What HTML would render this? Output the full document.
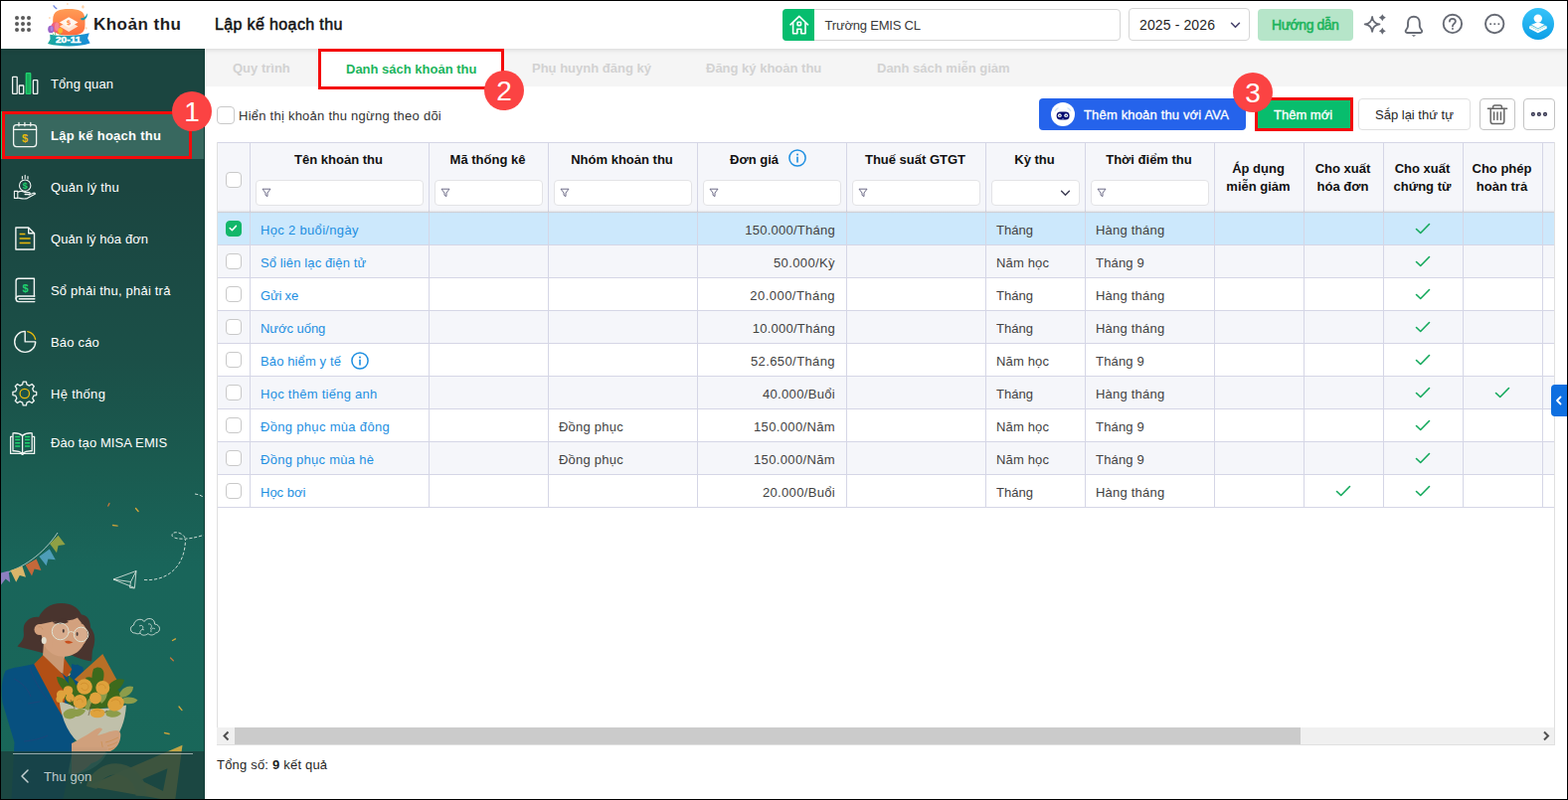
<!DOCTYPE html>
<html lang="vi">
<head>
<meta charset="utf-8">
<title>Khoản thu - Lập kế hoạch thu</title>
<style>
*{box-sizing:border-box;margin:0;padding:0}
html,body{width:1577px;height:805px;overflow:hidden;background:#fff}
body{font-family:"Liberation Sans",sans-serif;font-size:13px;color:#212121;position:relative}
.frame{position:absolute;left:0;top:0;width:1577px;height:805px;border:1px solid #000;z-index:100;pointer-events:none}
.abs{position:absolute}
.t{position:absolute;white-space:nowrap;line-height:1}

/* ---------- header ---------- */
header{position:absolute;left:1px;top:1px;width:1575px;height:48px;background:#fff;z-index:20;box-shadow:0 1px 5px rgba(0,0,0,.13)}
.apps{position:absolute;left:14px;top:15px;width:16px;height:16px}
.apps i{position:absolute;width:4px;height:4px;border-radius:50%;background:#5a5a5a}
.logo{position:absolute;left:46px;top:1px;width:46px;height:46px}
.brand{left:93px;top:15px;font-size:17px;font-weight:700;color:#1f1f1f;letter-spacing:.48px}
.pagetitle{left:215px;top:16px;font-size:16px;font-weight:400;color:#111;-webkit-text-stroke:.5px #111;letter-spacing:.37px}
.school{position:absolute;left:786px;top:8px;width:340px;height:32px;border:1px solid #d6d6d6;border-radius:4px;background:#fff}
.school .ic{position:absolute;left:-1px;top:-1px;width:32px;height:32px;background:#06bd6e;border-radius:4px 0 0 4px}
.school .t{left:41.500px;top:9px;font-size:13px;color:#3a3a3a;letter-spacing:-.2px}
.year{position:absolute;left:1134px;top:7px;width:122px;height:33px;border:1px solid #d6d6d6;border-radius:4px;background:#fff}
.year .t{left:10px;top:9px;font-size:14px;color:#1f1f1f;letter-spacing:.12px}
.guide{position:absolute;left:1264px;top:8px;width:96px;height:32px;border-radius:4px;background:#b6e5c9}
.guide .t{left:14px;top:9px;font-size:14px;font-weight:400;color:#1cb45c;-webkit-text-stroke:.55px #1cb45c;letter-spacing:-.45px}
.hicon{position:absolute}
.avatar{position:absolute;left:1530px;top:7px;width:32px;height:32px;border-radius:50%;background:linear-gradient(#36c3f9,#0d9fe6)}

/* ---------- sidebar ---------- */
aside{position:absolute;left:1px;top:49px;width:205px;height:755px;overflow:hidden;border-right:1px solid #0f3a34;
 background:linear-gradient(180deg,#1b4540 0,#1b4540 140px,#1b4a44 215px,#1b5048 315px,#1a5b50 420px,#19655a 520px,#196759 755px)}
.mi{position:absolute;left:0;width:204px;height:48px}
.mi .t{left:50px;top:18px;font-size:13px;color:#fff}
.mi svg{position:absolute;left:0;top:0;width:48px;height:48px}
.mi.active{background:#38685f}
.mi.active .t{font-weight:700}
.mi.active:before{content:"";position:absolute;left:0;top:0;width:2px;height:48px;background:#1fc46c}
.collapse{position:absolute;left:0;top:707px;width:205px;height:48px;background:rgba(27,64,60,.8)}
.collapse .ln{position:absolute;left:12px;top:2px;width:181px;height:1px;background:rgba(255,255,255,.55)}
.collapse .t{left:43px;top:19px;letter-spacing:.1px;font-size:13px;color:rgba(255,255,255,.72)}

/* ---------- main ---------- */
main{position:absolute;left:207px;top:49px;width:1369px;height:755px;background:#fff}
.tabs{position:absolute;left:0;top:0;width:1369px;height:38px;background:#f5f5f5}
.tabs .t{top:13px;font-size:13px;font-weight:700;color:#d2d2d2}
.tabs .on{position:absolute;left:116px;top:3px;width:181px;height:35px;background:#fff}
.tabs .on .t{left:25px;top:11px;color:#1cb45c}

.redbox{position:absolute;border:3px solid #f40b0b;z-index:30}
.badge{position:absolute;width:40px;height:40px;border-radius:50%;background:#fb4343;color:#fff;z-index:31;text-align:center;font-size:28px;line-height:42px}

.cb{position:absolute;width:18px;height:18px;border:1px solid #c9c9c9;border-radius:4px;background:#fff}
.btn{position:absolute;top:50px;height:32px;border-radius:4px}
.btn .t{top:10px;font-size:13px}

/* ---------- toolbar ---------- */
.tb-label{left:33px;top:61px;font-size:13px;color:#333;letter-spacing:.245px}
.b-ava{left:838px;width:208px;background:#2563eb}
.b-ava .t{left:45px;color:#fff;-webkit-text-stroke:.3px #fff;letter-spacing:.16px}
.b-ava .face{position:absolute;left:12px;top:4px;width:24px;height:24px;border-radius:50%;background:#fff}
.b-add{left:1058px;width:93px;background:#08bd6d;border-radius:0}
.b-add .t{left:16px;color:#fff;-webkit-text-stroke:.3px #fff}
.b-sort{left:1159px;width:113px;background:#fff;border:1px solid #e0e0e0}
.b-sort .t{left:16px;top:9px;color:#1f1f1f}
.b-del{left:1281px;width:36px;background:#fff;border:1px solid #c4c4c4}
.b-more{left:1325px;width:32px;background:#fff;border:1px solid #c4c4c4}

/* ---------- grid ---------- */
.grid{position:absolute;left:11px;top:94px;width:1346px;height:607px;border-left:1px solid #e0e0e0;border-right:1px solid #e0e0e0;border-bottom:1px solid #e0e0e0;overflow:hidden}
table{border-collapse:collapse;table-layout:fixed;width:1413px;position:absolute;left:-1px;top:0}
td,th{border:1px solid #d5d6e6;padding:0;font-size:13px;font-weight:400;overflow:hidden;white-space:nowrap}
thead th{height:70px;background:#f5f6fa;position:relative;vertical-align:top;border-bottom:1px solid #d8d8de}
thead th .h{position:absolute;left:-2px;right:0;top:10px;text-align:center;font-weight:700;font-size:13px;color:#111;line-height:13px}
thead th .h2{top:17px;line-height:18px}
thead th .f{position:absolute;left:5px;right:5px;top:37px;height:26px;border:1px solid #e3e3e6;border-radius:4px;background:#fff}
thead th .f svg{position:absolute;left:5px;top:7px;width:10px;height:10px}
tbody td{height:33px;color:#424242;padding:3px 11px 0 10px;position:relative}
tbody tr:nth-child(even) td{background:#f5f6fa}
tbody tr.sel td{background:#cce8fc}
tbody td.n{color:#1e8fe1}
tbody td.r{text-align:right}
tbody td.c{text-align:center;padding:0}
td .cb,th .cb{width:16px;height:16px}
td .cb{left:8px;top:8px}
td .cb.on{background:#12b76a;border-color:#12b76a}
.ck{width:16px;height:12px;vertical-align:middle;position:relative;left:-1px;top:-1px}
.info{display:inline-block;vertical-align:middle}
.hsh{position:absolute;left:0;top:68px;width:100%;height:4px;background:linear-gradient(rgba(0,0,0,0),rgba(0,0,0,.05) 40%,rgba(0,0,0,.04) 60%,rgba(0,0,0,0));z-index:3;pointer-events:none}
.hscroll{position:absolute;left:11px;top:683px;width:1345px;height:17px;background:#f0f0f0}
.hscroll .th{position:absolute;left:18px;top:0;width:1072px;height:17px;background:#cbcbcb}
.total{left:11px;top:714px;font-size:13px;color:#1f1f1f;letter-spacing:.2px}
.fly{position:absolute;left:1353px;top:338px;width:16px;height:32px;background:#0e6fe0;border-radius:4px 0 0 4px}
</style>
</head>
<body>
<div class="frame"></div>

<!-- HEADER -->
<header>
  <div class="apps">
    <i style="left:0;top:0"></i><i style="left:6px;top:0"></i><i style="left:12px;top:0"></i>
    <i style="left:0;top:6px"></i><i style="left:6px;top:6px"></i><i style="left:12px;top:6px"></i>
    <i style="left:0;top:12px"></i><i style="left:6px;top:12px"></i><i style="left:12px;top:12px"></i>
  </div>
  <svg class="abs" style="left:46px;top:0" width="46" height="48" viewBox="47 1 46 48">
<defs><linearGradient id="lg1" x1="0" y1="0" x2="0" y2="1"><stop offset="0" stop-color="#ff9c55"/><stop offset="1" stop-color="#ff6c3e"/></linearGradient>
<linearGradient id="lg2" x1="0" y1="0" x2="1" y2="0"><stop offset="0" stop-color="#1aa89c"/><stop offset=".5" stop-color="#1a9fb8"/><stop offset="1" stop-color="#1a8cdc"/></linearGradient></defs>
<path d="M69.300 9c9.500 0 16.200 1.600 16.200 10.800v5.200c0 8.600-5 10.600-16.200 10.600s-16.100-2-16.100-10.600v-5.200c0-9.200 6.600-10.800 16.100-10.800z" fill="url(#lg1)"/>
<path d="M69.200 21.300l9.300 5.300-9.300 5.500-9.300-5.500z" fill="#ffe3d3"/>
<path d="M69.200 17.200l9.300 5.300-9.300 5.500-9.300-5.500z" fill="#fff7f0"/>
<text x="69.200" y="25.300" font-family="Liberation Sans, sans-serif" font-size="7" font-weight="700" fill="#ff8138" text-anchor="middle" transform="rotate(-8 69.200 22.700)">$</text>
<path d="M53 33.500l1.200 2M55.600 31.500v4M60.600 32.500l-.6 3" stroke="#7cc46a" stroke-width=".9" fill="none"/>
<ellipse cx="55.600" cy="27.400" rx="4.400" ry="5.200" fill="#f0607c"/><ellipse cx="57.200" cy="26.800" rx="2.200" ry="4.200" fill="#f58499"/>
<ellipse cx="51.200" cy="29.400" rx="3" ry="3.600" fill="#9a63c8"/><ellipse cx="52" cy="28.800" rx="1.400" ry="2.600" fill="#b183dc"/>
<ellipse cx="60.600" cy="30.800" rx="2.400" ry="2.800" fill="#fbb52b"/>
<path d="M50.200 34.800c6 1 12 1.300 19 1.100 8-.2 15-1.200 20.600-2.600l-1.700 5.200 2.500 4.900c-7 2.200-14 3-21.400 3-7.600 0-14-.6-21.200-2.400l2.500-4.400z" fill="url(#lg2)"/>
<text x="68.700" y="43.300" font-family="Liberation Sans, sans-serif" font-size="8.200" font-weight="700" fill="#fff" stroke="#fff" stroke-width=".4" text-anchor="middle" textLength="25.500" lengthAdjust="spacingAndGlyphs">20-11</text>
<path d="M54 5.800c.8 1.200 1.800 2.200 2.800 2.800" stroke="#6f86e0" stroke-width="1.300" stroke-linecap="round" fill="none"/>
<path d="M81.300 18.300c2.800.2 5.200-1.800 6.600-5 .3 4.200-2 7.200-5.400 7-1-.1-1.600-1.200-1.200-2z" fill="#1a98ac"/>
<circle cx="67.900" cy="4" r=".9" fill="#ffdcb8"/><ellipse cx="83.400" cy="6.900" rx="1.300" ry="1.700" fill="#ffd2a6"/><circle cx="49.900" cy="18" r=".9" fill="#ffd8b4"/><circle cx="86.600" cy="28.400" r="1.100" fill="#ffd8b4"/>
</svg>
  <div class="t brand">Khoản thu</div>
  <div class="t pagetitle">Lập kế hoạch thu</div>
  <div class="school"><div class="ic"><svg width="32" height="32" viewBox="-.8 0 32 32"><g fill="none" stroke="#fff" stroke-width="1.600" stroke-linejoin="round" stroke-linecap="round">
<path d="M7.200 15.800L16 7.400l8.800 8.400"/><path d="M9.800 14.200v10.600h4.200v-4.600h4v4.600h4.200V14.200"/><rect x="14.300" y="13.200" width="3.400" height="3.400" rx=".5"/></g></svg></div><div class="t">Trường EMIS CL</div></div>
  <div class="year"><div class="t">2025 - 2026</div><svg class="abs" style="left:101px;top:13px" width="11" height="7" viewBox="0 0 12 8"><path d="M1.500 1.500l4.500 4.500 4.500-4.500" fill="none" stroke="#45416a" stroke-width="1.800" stroke-linecap="round" stroke-linejoin="round"/></svg></div>
  <div class="guide"><div class="t">Hướng dẫn</div></div>
  <svg class="hicon" style="left:1365px;top:4px" width="160" height="40" viewBox="1366 5 160 40">
<path d="M1380.1 17.0Q1380.84 23.66 1387.5 24.4Q1380.84 25.14 1380.1 31.799999999999997Q1379.36 25.14 1372.6999999999998 24.4Q1379.36 23.66 1380.1 17.0z" fill="none" stroke="#666a74" stroke-width="1.800" stroke-linejoin="round"/>
<path d="M1390.3 14.2Q1391.175 16.825 1393.8 17.7Q1391.175 18.575 1390.3 21.2Q1389.425 18.575 1386.8 17.7Q1389.425 16.825 1390.3 14.2z" fill="#666a74"/><path d="M1390.3 27.8Q1391.175 30.425 1393.8 31.3Q1391.175 32.175 1390.3 34.8Q1389.425 32.175 1386.8 31.3Q1389.425 30.425 1390.3 27.8z" fill="#666a74"/>
<path d="M1421.900 16.700c-3.600 0-5.900 2.700-5.900 6.200v3.400c0 1.600-.9 2.700-2 4.100-.9 1.200-.1 2.600 1.300 2.600h13.200c1.400 0 2.200-1.400 1.300-2.600-1.100-1.400-2-2.500-2-4.100v-3.400c0-3.500-2.300-6.200-5.900-6.200z" fill="none" stroke="#666a74" stroke-width="1.900" stroke-linejoin="round"/>
<path d="M1419.700 35.200h4.400l-2.200 1.800z" fill="#666a74"/>
<circle cx="1460.900" cy="23.900" r="9.200" fill="none" stroke="#666a74" stroke-width="1.900"/>
<path d="M1457.900 21.600c0-1.700 1.300-2.800 3-2.800s3 1.100 3 2.700c0 2.200-3 2.300-3 4.900" fill="none" stroke="#666a74" stroke-width="1.800" stroke-linecap="round"/>
<rect x="1460.100" y="28.100" width="1.700" height="1.700" fill="#666a74"/>
<circle cx="1503.200" cy="24" r="9.200" fill="none" stroke="#666a74" stroke-width="1.900"/>
<rect x="1498.300" y="23.300" width="1.700" height="1.700" fill="#666a74"/><rect x="1502.400" y="23.300" width="1.700" height="1.700" fill="#666a74"/><rect x="1506.500" y="23.300" width="1.700" height="1.700" fill="#666a74"/>
</svg>
  <div class="avatar"><svg width="32" height="32" viewBox="0 -1 32 32"><circle cx="15.800" cy="9.600" r="4.200" fill="#fff"/>
<path d="M15.800 13.200l6.600 2.600-6.600 3.700-6.600-3.700z" fill="#fff"/>
<path d="M7.100 17.300l8.700 4.400 8.900-4.400v2.400l-8.900 4.600-8.700-4.600z" fill="#fff"/>
<path d="M7.100 17.300l2-.8 6.700 3.600 6.900-3.600 2 .8-8.900 4.400z" fill="#dff3e6"/></svg></div>
</header>

<!-- SIDEBAR -->
<aside>
  <svg class="abs" style="left:0;top:431px" width="205" height="324" viewBox="1 480 205 324">
<!-- rulers -->
<path d="M183.500 749.800L88 791l88 15.500zM168.500 773.300l-4.500 22.700-23-11z" fill="#c2a545" fill-rule="evenodd"/>
<path d="M92 792.500a25.500 25.500 0 0 1 50 8.500" fill="none" stroke="#b5a552" stroke-width="11" opacity=".9"/>
<path d="M52 757h56c-4 9-12 16-24 20-10 3-22 2-30-3z" fill="#9fd0b4" opacity=".55"/>
<!-- bunting -->
<path d="M1 578c22-6 42-20 57-42" fill="none" stroke="#e8efe9" stroke-width=".7"/>
<path d="M1 576.500l7.600-2 1.600 11.500-4.600-3.500-4.600 6z" fill="#8d7fc0"/>
<path d="M10.400 574l12-4.200 3.600 11-6.200-1.800-3.600 6.800z" fill="#d9b56a"/>
<path d="M25.600 568.500l11-6 4.800 11.500-6.800-1.600-2.600 7z" fill="#c4683a"/>
<path d="M39.400 560l10.400-7.600 6 10.800-7.400-.8-1.800 6.800z" fill="#4e9db8"/>
<path d="M50 547l8.600-8.200 7 9.200-7 1-1.600 7.200z" fill="#8fa045"/>
<!-- plane + dashed path -->
<g fill="none" stroke="#e8efe9" stroke-width=".8" stroke-linejoin="round"><path d="M114 583l23-8.500-1.600 17z"/><path d="M114 583l17.500 2.500 5.500-11M131.500 585.500l-1 5.800 4.900.7"/></g>
<path d="M145 583.500c22 1.500 41-12 41.500-40.500M186 541c-3-6-13-7-13-2.500 0 4 14 6 33-.5M196 497c4 .5 7 2 10 4" fill="none" stroke="#dfe9e2" stroke-width=".9" stroke-dasharray="3.200 1.800"/>
<!-- cloud --><g transform="translate(0 -3)">
<path d="M136 640c-5 .5-6.500-6.500-1.500-8 .5-6 8.500-7.500 10.500-3.500 3-5 11-3.500 10.500 2.500 6 .5 7 8 1 9-2 2.500-6 2.500-7.500.5-3 2.500-7 2-8-.5-1.500 1-3.500 1-5 0z" fill="none" stroke="#e8efe9" stroke-width=".8"/>
<path d="M140 633c3-2 5 1 3 3.500M149 631c3.500-1 4.500 3 2 5M152 639c-1-3 2-5 4-3M141 640c-.5-2.500 2-4.500 4-3" fill="none" stroke="#e8efe9" stroke-width=".7"/>
</g>
<!-- confetti -->
<g stroke-width="1.300" stroke-linecap="round"><path d="M110 506.500l-1.200 2.600" stroke="#c9763a"/><path d="M136.500 511.500l2.600 3" stroke="#d7a83a"/><path d="M113.500 528.500l4.600.6" stroke="#c7a03a"/>
<path d="M173.500 644.500l3-1.600" stroke="#d7a83a"/><path d="M171.500 662l2.800 2.800" stroke="#c9763a"/><path d="M180 711l3 3.600" stroke="#d7a83a"/><path d="M165.500 737.500l4.600 1" stroke="#c7a03a"/></g>
<!-- hair back -->
<path d="M62 607c-12 0-19 6-23 14-7-1-13 3-15 9-1 6 1 9-1 13-1 3-4 5-5.500 7.500 9 2 19 5 27 7l28 2c6 3 13 5 19.500 6 1-5 0-9 2-14 2-7 2-14-3-20 0-8-4-13-9-13-4-8-11-11.500-20-11.500z" fill="#49342e"/>
<!-- neck -->
<path d="M44 646l21 12 0 10 8 14-14 6-16-28z" fill="#c99873"/>
<!-- face -->
<path d="M52 626c-3 8 0 14-6 19l-1 5c4 7 12 12 22 10.500 8-1 14-6 17-12 4-5 5-10 3-15-2-5-7-8-9-12-5 3-15 4-26 4.500z" fill="#d3a17e"/>
<path d="M36.500 629l16.500-3.500-1 27-7-2.500-3.500-11z" fill="#d3a17e"/><circle cx="40" cy="633.500" r="5.500" fill="#d3a17e"/><path d="M38.500 631c2-1 4 0 4.500 2.500" fill="none" stroke="#c18a5e" stroke-width=".6"/>
<ellipse cx="44.200" cy="644.500" rx="2.500" ry="3.500" fill="#e4dfcf"/>
<path d="M53 627c6 2 12 1 16-1l-5-4z" fill="#49342e"/><path d="M81 627c2 .4 4 1.400 5.500 2.800l-1-4.500z" fill="#49342e"/>
<ellipse cx="63.800" cy="634.800" rx="1" ry="1.900" fill="#30221f"/><ellipse cx="77.600" cy="638" rx="1" ry="1.900" fill="#30221f"/>
<path d="M65 645.500c2-1.400 5-1 8.500.8-3 1.800-6.500 2.200-8.500-.8z" fill="#c84e1c"/>
<g fill="rgba(255,255,255,.12)" stroke="#dfe3d4" stroke-width="1"><circle cx="60.700" cy="635.400" r="8.400"/><circle cx="81.600" cy="638.400" r="7.300"/></g>
<path d="M69 636.500c2-1.500 4-1 5.400.5" fill="none" stroke="#dfe3d4" stroke-width=".9"/>
<!-- jacket -->
<path d="M34 668c-10 3-22 3-28.500 7-4 8-4.500 20-3 32l12 40-3 57h52l10-52 6-40 4-40-6-3.500-8 12-14-6z" fill="#07507f"/>
<path d="M72 668l11 3 3 12-14 6z" fill="#07507f"/>
<!-- shirt -->
<path d="M34.200 668.300l9-9 20 19.400 5 11-6 30-6-10z" fill="#b24f15"/><path d="M64.600 662l7.700 11.500-5 8-4-3z" fill="#b24f15"/>
<path d="M14 683c8 4 14 10 17 18M30 672c4 12 10 22 18 32M24 746c10-1 18-3 24-6M40 706l-12 2" fill="none" stroke="#2a3f78" stroke-width=".6"/>
<!-- kraft wrap -->
<path d="M103.300 658l15.500 28.400-18 14-26-16.600z" fill="#b86f26"/>
<!-- cream paper -->
<path d="M59.500 705c20 9 48 10 67.500 4.500-1 16-6 29-14 37l-30 3.500c-13-8-21-25-23.500-45z" fill="#c0c0aa"/>
<!-- leaves -->
<path d="M66 694c7-5 20-8 32-7 10 1 19 4 23 10 2 5-2 10-8 13-10 4-30 5-41 0-7-4-10-11-6-16z" fill="#3d6a1c"/>
<g fill="#3d6a1c"><path d="M57 681c7 0 13 6 16 14l-4 3c-6-4-11-9-12-17z"/><path d="M69 680c5 3 8 9 8 16l-4 0c-3-5-5-10-4-16z"/><path d="M94 673c6-4 11 0 10.500 6 0 6-3 11-7.500 15l-4-3c-1-6-1-12 1-18z"/><path d="M86 682c4-2 8 0 10 4l-4 8z"/><path d="M109 690c4-6 11-8 16-6-1 6-6 11-13 14z"/></g>
<g fill="#8c9c4a"><path d="M120 698c3-6 9-9 14-7 0 6-6 11-13 11z"/><path d="M123 703c5-2.500 12-1.500 15.500 1.500-3 4-10 5-15 2.500z"/><path d="M64 717c3-4 9-5 13-3 3-2 7-1 9 1-2 4-6 6-10 6-3 3-8 3-11 1-1-2-2-3.500-1-5z"/><path d="M106 716c5-3 12-2 16 2-3 4-10 5-15 2z"/><path d="M99 702c2-5 6-7 9-7 0 6-2 10-6 13z"/><path d="M85 713l4-10 4 2-4 10z"/></g>
<!-- roses -->
<g fill="#dfa23c"><circle cx="85" cy="691" r="7.800"/><circle cx="103.300" cy="692" r="7"/><circle cx="80.500" cy="706" r="7"/><circle cx="96" cy="702.500" r="6"/><ellipse cx="116.500" cy="708" rx="8.600" ry="7.200" transform="rotate(-25 116.500 708)"/><ellipse cx="98" cy="717.500" rx="7.500" ry="4.800"/><circle cx="61.500" cy="699" r="4.600"/><circle cx="68.500" cy="695" r="4.800"/><circle cx="70.500" cy="702" r="4.400"/><circle cx="60" cy="703.500" r="3.600"/></g>
<g fill="none" stroke="#c98726" stroke-width=".6"><path d="M81 689c2-3 8-2 8 2s-6 5-7 1M99 690c2-3 8-1 7 3M77 705c2-3 7-2 6 2M112 706c3-4 10-2 9 3M94 716c2-2 6-2 7 0"/></g>
<path d="M71 704l4 9M92 708l-3 12M108 715l-3 2" stroke="#5a4a2a" stroke-width=".6" fill="none"/>
<!-- hand -->
<path d="M72 748c8-4 18-10 24-14 3-2 6-2 7 0l-5 6c6-1 13-5 19-5 4 0 5 3 4 8-1 6-5 11-10 13l-39 2z" fill="#d0a07c"/>
<path d="M102 746l2 10M106 747c5-1 9-3 13-5M108 750.500c4-1 7-2 10-4M109 754c3-.5 5-1 7-2" fill="none" stroke="#c98a45" stroke-width=".6"/>
<path d="M72 752h36c-2 8-8 14-16 16-6 6-12 10-20 12z" fill="#cc9d7a"/>
</svg>
  <div class="mi" style="top:11px"><svg viewBox="0 0 48 48"><g fill="none" stroke-width="1.3">
<rect x="11.6" y="17.4" width="4.6" height="17" rx=".6" stroke="#f2f5f3"/><rect x="18.3" y="26" width="4.4" height="8.4" rx=".6" stroke="#f2f5f3"/>
<rect x="25.3" y="13.6" width="4.4" height="20.8" rx=".6" stroke="#1fd36f" fill="#17a95a"/><rect x="32.4" y="20.6" width="4.4" height="13.8" rx=".6" stroke="#f2f5f3"/></g></svg><div class="t" style="letter-spacing:0.1px">Tổng quan</div></div>
  <div class="mi active" style="top:63px"><svg viewBox="0 0 48 48"><g fill="none" stroke="#f2f5f3" stroke-width="1.3" stroke-linecap="round">
<rect x="12.6" y="13.6" width="23" height="22" rx="3"/><path d="M12.6 18.4h23"/>
<path d="M18 11.4v3.4M23.9 11.4v3.4M29.8 11.4v3.4"/></g>
<text x="24.1" y="31.2" font-family="Liberation Sans, sans-serif" font-size="11" font-weight="700" fill="#e9b90c" text-anchor="middle">$</text></svg><div class="t" style="letter-spacing:0.27px">Lập kế hoạch thu</div></div>
  <div class="mi" style="top:115px"><svg viewBox="0 0 48 48"><g fill="none" stroke="#f2f5f3" stroke-width="1.1" stroke-linecap="round" stroke-linejoin="round">
<circle cx="24.2" cy="22.7" r="5.7"/><path d="M21.4 13.6v2.4M24.2 12.2v3.4M27 13.6v2.4"/>
<path d="M13.4 28.4h3.4v7h-3.4zM16.8 29.4c2.4-1.4 5-1.2 7.2.2h4.2c1.4 0 1.4 2-.2 2h-4M16.8 35c4 .8 6 1.6 9.600.6l8.200-4.600c-1-1.600-2.400-1-6.400 1.200"/></g>
<text x="24.2" y="26" font-family="Liberation Sans, sans-serif" font-size="9" font-weight="700" fill="#1fd36f" text-anchor="middle">$</text></svg><div class="t" style="letter-spacing:0.23px">Quản lý thu</div></div>
  <div class="mi" style="top:167px"><svg viewBox="0 0 48 48"><g fill="none" stroke="#f2f5f3" stroke-width="1.4" stroke-linejoin="round">
<path d="M14.9 13h12.800l5.800 5.800v16.200h-18.600z"/><path d="M27.700 13v5.800h5.800" /></g>
<g stroke="#e9b90c" stroke-width="1.5"><path d="M18.600 19.600h5.800M18.600 24h11M18.600 28.600h11"/></g></svg><div class="t" style="letter-spacing:0.1px">Quản lý hóa đơn</div></div>
  <div class="mi" style="top:219px"><svg viewBox="0 0 48 48"><g fill="none" stroke="#f2f5f3" stroke-width="1.4" stroke-linejoin="round" stroke-linecap="round">
<path d="M33.400 30V12.300H17.500c-1.400 0-2.400 1-2.400 2.400v18"/><path d="M33.800 30H18c-3.800 0-3.800 5.600 0 5.600h15.800"/><path d="M18.400 32.800h15.400"/></g>
<text x="24.600" y="26.200" font-family="Liberation Sans, sans-serif" font-size="11" font-weight="700" fill="#1fd36f" text-anchor="middle">$</text></svg><div class="t" style="letter-spacing:0.2px">Sổ phải thu, phải trả</div></div>
  <div class="mi" style="top:271px"><svg viewBox="0 0 48 48"><g fill="none" stroke-width="1.4" stroke-linecap="round" stroke-linejoin="round">
<path d="M24.200 13.400a10.500 10.500 0 1 0 10.500 10.500h-10.500z" stroke="#f2f5f3"/>
<path d="M26.800 13.600a10.500 10.500 0 0 1 7.800 7.600" stroke="#e9b90c"/></g></svg><div class="t" style="letter-spacing:0.19px">Báo cáo</div></div>
  <div class="mi" style="top:323px"><svg viewBox="0 0 48 48"><path d="M32.84 21.83L35.69 22.40L35.69 25.60L32.84 26.17L31.73 28.86L33.34 31.28L31.08 33.54L28.66 31.93L25.97 33.04L25.40 35.89L22.20 35.89L21.63 33.04L18.94 31.93L16.52 33.54L14.26 31.28L15.87 28.86L14.76 26.17L11.91 25.60L11.91 22.40L14.76 21.83L15.87 19.14L14.26 16.72L16.52 14.46L18.94 16.07L21.63 14.96L22.20 12.11L25.40 12.11L25.97 14.96L28.66 16.07L31.08 14.46L33.34 16.72L31.73 19.14z" fill="none" stroke="#f2f5f3" stroke-width="1.3" stroke-linejoin="round"/>
<circle cx="23.800" cy="24" r="4.700" fill="none" stroke="#e9b90c" stroke-width="1.300"/></svg><div class="t" style="letter-spacing:0.3px">Hệ thống</div></div>
  <div class="mi" style="top:373px"><svg viewBox="0 0 48 48"><g fill="none" stroke="#f2f5f3" stroke-width="1.300" stroke-linejoin="round">
<path d="M11.600 17.400H9.600v17h10.600l1.400 1 1.400-1H33.600v-17h-2"/>
<path d="M21.600 16.400c-3-2.600-6.600-2.800-9.600-2.600v18c3.400-.2 6.600 0 9.600 2.400 3-2.400 6.200-2.600 9.600-2.400v-18c-3-.2-6.600 0-9.600 2.600zM21.600 16.400v17.600"/></g>
<g stroke="#1fd36f" stroke-width="1.500"><path d="M14.200 17.400h5M14.200 20.600h5M14.200 23.800h5M14.200 27h5M24 17.400h5M24 20.600h5M24 23.800h5M24 27h5"/></g></svg><div class="t" style="letter-spacing:0.1px;top:17px">Đào tạo MISA EMIS</div></div>
  
  <div class="collapse"><div class="ln"></div><svg class="abs" style="left:18px;top:17px" width="12" height="16" viewBox="0 0 12 16"><path d="M9 2L3 8l6 6" fill="none" stroke="rgba(255,255,255,.75)" stroke-width="1.500" stroke-linecap="round" stroke-linejoin="round"/></svg><div class="t">Thu gọn</div></div>
</aside>

<!-- MAIN -->
<main>
  <div class="tabs">
    <div class="t" style="left:27px">Quy trình</div>
    <div class="on"><div class="t">Danh sách khoản thu</div></div>
    <div class="t" style="left:328px">Phụ huynh đăng ký</div>
    <div class="t" style="left:503px">Đăng ký khoản thu</div>
    <div class="t" style="left:675px">Danh sách miễn giảm</div>
  </div>
  
  <div class="cb" style="left:11px;top:58px"></div>
  <div class="t tb-label">Hiển thị khoản thu ngừng theo dõi</div>
  <div class="btn b-ava"><div class="face"><svg width="24" height="24" viewBox="0 0 24 24"><rect x="5.600" y="9.400" width="13" height="8.200" rx="4" fill="#050a6e"/>
<circle cx="8.800" cy="13.200" r="1.900" fill="#e8eefc"/><circle cx="15.200" cy="13.200" r="1.900" fill="#e8eefc"/>
<circle cx="8.900" cy="13.400" r=".7" fill="#333"/><circle cx="15.300" cy="13.400" r=".7" fill="#333"/>
<path d="M4.300 8.600c.6-1.400 1.600-2.300 2.800-2.800M19.700 8.600c-.6-1.400-1.600-2.300-2.800-2.800" fill="none" stroke="#cfe3fb" stroke-width="1.300" stroke-linecap="round"/>
<path d="M11 16.200l1 .9 1-.9" fill="none" stroke="#9aa7e0" stroke-width=".6"/></svg></div><div class="t">Thêm khoản thu với AVA</div></div>
  <div class="btn b-add"><div class="t">Thêm mới</div></div>
  <div class="btn b-sort"><div class="t">Sắp lại thứ tự</div></div>
  <div class="btn b-del"><svg class="abs" style="left:-1px;top:-1px" width="36" height="32" viewBox="0 0 36 32"><g fill="none" stroke="#666" stroke-width="1.500" stroke-linecap="round" stroke-linejoin="round">
<path d="M8.400 10.200h19.200"/><path d="M13.600 10V8.600c0-.9.700-1.600 1.600-1.600h5.600c.9 0 1.600.7 1.600 1.600V10"/>
<path d="M11.200 10.400v12.600c0 1.500 1.100 2.600 2.600 2.600h8.400c1.500 0 2.600-1.100 2.600-2.600V10.400"/><path d="M14.600 14v7.400M18 14v7.400M21.400 14v7.400"/></g></svg></div>
  <div class="btn b-more"><svg class="abs" style="left:-1px;top:-1px" width="32" height="32" viewBox="0 0 32 32"><g fill="#7d7f96" stroke="#35354d" stroke-width="1.100"><circle cx="9.900" cy="15.900" r="1.500"/><circle cx="15.900" cy="15.900" r="1.500"/><circle cx="22" cy="15.900" r="1.500"/></g></svg></div>

  <div class="grid"><table><colgroup><col style="width:33px"><col style="width:180px"><col style="width:120px"><col style="width:150px"><col style="width:150px"><col style="width:140px"><col style="width:100px"><col style="width:130px"><col style="width:90px"><col style="width:80px"><col style="width:80px"><col style="width:80px"><col style="width:80px"></colgroup><thead><tr><th><div class="cb" style="left:8px;top:29px"></div></th><th><div class="h">Tên khoản thu</div><div class="f"><svg viewBox="0 0 10 10"><path d="M1 1.2h8L6 5v3.6L4 7.4V5z" fill="none" stroke="#5d5c7a" stroke-width=".9" stroke-linejoin="round"/></svg></div></th><th><div class="h">Mã thống kê</div><div class="f"><svg viewBox="0 0 10 10"><path d="M1 1.2h8L6 5v3.6L4 7.4V5z" fill="none" stroke="#5d5c7a" stroke-width=".9" stroke-linejoin="round"/></svg></div></th><th><div class="h">Nhóm khoản thu</div><div class="f"><svg viewBox="0 0 10 10"><path d="M1 1.2h8L6 5v3.6L4 7.4V5z" fill="none" stroke="#5d5c7a" stroke-width=".9" stroke-linejoin="round"/></svg></div></th><th><div class="h" style="padding-right:34px">Đơn giá</div><div class="abs" style="left:91px;top:6px"><svg class="info" width="18" height="18" viewBox="0 0 18 18" style="margin:0"><circle cx="9" cy="9" r="8.100" fill="none" stroke="#1e8fe1" stroke-width="1.500"/><circle cx="9" cy="5.500" r="1" fill="#1e8fe1"/><path d="M9 8.200v4.800" stroke="#1e8fe1" stroke-width="1.600" stroke-linecap="round"/></svg></div><div class="f"><svg viewBox="0 0 10 10"><path d="M1 1.2h8L6 5v3.6L4 7.4V5z" fill="none" stroke="#5d5c7a" stroke-width=".9" stroke-linejoin="round"/></svg></div></th><th><div class="h">Thuế suất GTGT</div><div class="f"><svg viewBox="0 0 10 10"><path d="M1 1.2h8L6 5v3.6L4 7.4V5z" fill="none" stroke="#5d5c7a" stroke-width=".9" stroke-linejoin="round"/></svg></div></th><th><div class="h">Kỳ thu</div><div class="f"><svg viewBox="0 0 12 8" style="left:auto;right:8px;top:9px;width:11px;height:7px"><path d="M1.5 1.5l4.5 4.5 4.5-4.5" fill="none" stroke="#3a3950" stroke-width="1.6" stroke-linecap="round" stroke-linejoin="round"/></svg></div></th><th><div class="h">Thời điểm thu</div><div class="f"><svg viewBox="0 0 10 10"><path d="M1 1.2h8L6 5v3.6L4 7.4V5z" fill="none" stroke="#5d5c7a" stroke-width=".9" stroke-linejoin="round"/></svg></div></th><th><div class="h h2">Áp dụng<br>miễn giảm</div></th><th><div class="h h2">Cho xuất<br>hóa đơn</div></th><th><div class="h h2">Cho xuất<br>chứng từ</div></th><th><div class="h h2">Cho phép<br>hoàn trả</div></th><th></th></tr></thead><tbody><tr class="sel"><td class="c"><div class="cb on"><svg viewBox="0 0 16 16" width="14" height="14" style="position:absolute;left:0;top:0"><path d="M3.6 7.4l2.6 2.6 4.6-5" fill="none" stroke="#fff" stroke-width="1.7" stroke-linecap="round" stroke-linejoin="round"/></svg></div></td><td class="n" style="letter-spacing:0.320px">Học 2 buổi/ngày</td><td></td><td></td><td class="r" style="letter-spacing:0.254px">150.000/Tháng</td><td></td><td>Tháng</td><td style="letter-spacing:0.220px">Hàng tháng</td><td></td><td class="c"></td><td class="c"><svg class="ck" viewBox="0 0 16 12"><path d="M1.5 6.5l4.2 4L14.5 1.5" fill="none" stroke="#14a95c" stroke-width="1.6" stroke-linecap="round" stroke-linejoin="round"/></svg></td><td class="c"></td><td></td></tr><tr><td class="c"><div class="cb"></div></td><td class="n" style="letter-spacing:0.116px">Sổ liên lạc điện tử</td><td></td><td></td><td class="r" style="letter-spacing:0.389px">50.000/Kỳ</td><td></td><td style="letter-spacing:0.157px">Năm học</td><td style="letter-spacing:0.186px">Tháng 9</td><td></td><td class="c"></td><td class="c"><svg class="ck" viewBox="0 0 16 12"><path d="M1.5 6.5l4.2 4L14.5 1.5" fill="none" stroke="#14a95c" stroke-width="1.6" stroke-linecap="round" stroke-linejoin="round"/></svg></td><td class="c"></td><td></td></tr><tr><td class="c"><div class="cb"></div></td><td class="n" style="letter-spacing:-0.183px">Gửi xe</td><td></td><td></td><td class="r" style="letter-spacing:0.450px">20.000/Tháng</td><td></td><td>Tháng</td><td style="letter-spacing:0.220px">Hàng tháng</td><td></td><td class="c"></td><td class="c"><svg class="ck" viewBox="0 0 16 12"><path d="M1.5 6.5l4.2 4L14.5 1.5" fill="none" stroke="#14a95c" stroke-width="1.6" stroke-linecap="round" stroke-linejoin="round"/></svg></td><td class="c"></td><td></td></tr><tr><td class="c"><div class="cb"></div></td><td class="n" style="letter-spacing:-0.044px">Nước uống</td><td></td><td></td><td class="r" style="letter-spacing:0.258px">10.000/Tháng</td><td></td><td>Tháng</td><td style="letter-spacing:0.220px">Hàng tháng</td><td></td><td class="c"></td><td class="c"><svg class="ck" viewBox="0 0 16 12"><path d="M1.5 6.5l4.2 4L14.5 1.5" fill="none" stroke="#14a95c" stroke-width="1.6" stroke-linecap="round" stroke-linejoin="round"/></svg></td><td class="c"></td><td></td></tr><tr><td class="c"><div class="cb"></div></td><td class="n" style="letter-spacing:0.115px">Bảo hiểm y tế<svg class="info" width="18" height="18" viewBox="0 0 18 18" style="position:absolute;left:101px;top:8px"><circle cx="9" cy="9" r="8.100" fill="none" stroke="#1e8fe1" stroke-width="1.500"/><circle cx="9" cy="5.500" r="1" fill="#1e8fe1"/><path d="M9 8.200v4.800" stroke="#1e8fe1" stroke-width="1.600" stroke-linecap="round"/></svg></td><td></td><td></td><td class="r" style="letter-spacing:0.400px">52.650/Tháng</td><td></td><td style="letter-spacing:0.157px">Năm học</td><td style="letter-spacing:0.186px">Tháng 9</td><td></td><td class="c"></td><td class="c"><svg class="ck" viewBox="0 0 16 12"><path d="M1.5 6.5l4.2 4L14.5 1.5" fill="none" stroke="#14a95c" stroke-width="1.6" stroke-linecap="round" stroke-linejoin="round"/></svg></td><td class="c"></td><td></td></tr><tr><td class="c"><div class="cb"></div></td><td class="n" style="letter-spacing:0.267px">Học thêm tiếng anh</td><td></td><td></td><td class="r" style="letter-spacing:0.327px">40.000/Buổi</td><td></td><td>Tháng</td><td style="letter-spacing:0.220px">Hàng tháng</td><td></td><td class="c"></td><td class="c"><svg class="ck" viewBox="0 0 16 12"><path d="M1.5 6.5l4.2 4L14.5 1.5" fill="none" stroke="#14a95c" stroke-width="1.6" stroke-linecap="round" stroke-linejoin="round"/></svg></td><td class="c"><svg class="ck" viewBox="0 0 16 12"><path d="M1.5 6.5l4.2 4L14.5 1.5" fill="none" stroke="#14a95c" stroke-width="1.6" stroke-linecap="round" stroke-linejoin="round"/></svg></td><td></td></tr><tr><td class="c"><div class="cb"></div></td><td class="n" style="letter-spacing:0.317px">Đồng phục mùa đông</td><td></td><td style="letter-spacing:0.233px">Đồng phục</td><td class="r" style="letter-spacing:0.355px">150.000/Năm</td><td></td><td style="letter-spacing:0.157px">Năm học</td><td style="letter-spacing:0.186px">Tháng 9</td><td></td><td class="c"></td><td class="c"><svg class="ck" viewBox="0 0 16 12"><path d="M1.5 6.5l4.2 4L14.5 1.5" fill="none" stroke="#14a95c" stroke-width="1.6" stroke-linecap="round" stroke-linejoin="round"/></svg></td><td class="c"></td><td></td></tr><tr><td class="c"><div class="cb"></div></td><td class="n" style="letter-spacing:0.269px">Đồng phục mùa hè</td><td></td><td style="letter-spacing:0.233px">Đồng phục</td><td class="r" style="letter-spacing:0.355px">150.000/Năm</td><td></td><td style="letter-spacing:0.157px">Năm học</td><td style="letter-spacing:0.186px">Tháng 9</td><td></td><td class="c"></td><td class="c"><svg class="ck" viewBox="0 0 16 12"><path d="M1.5 6.5l4.2 4L14.5 1.5" fill="none" stroke="#14a95c" stroke-width="1.6" stroke-linecap="round" stroke-linejoin="round"/></svg></td><td class="c"></td><td></td></tr><tr><td class="c"><div class="cb"></div></td><td class="n">Học bơi</td><td></td><td></td><td class="r" style="letter-spacing:0.327px">20.000/Buổi</td><td></td><td>Tháng</td><td style="letter-spacing:0.220px">Hàng tháng</td><td></td><td class="c"><svg class="ck" viewBox="0 0 16 12"><path d="M1.5 6.5l4.2 4L14.5 1.5" fill="none" stroke="#14a95c" stroke-width="1.6" stroke-linecap="round" stroke-linejoin="round"/></svg></td><td class="c"><svg class="ck" viewBox="0 0 16 12"><path d="M1.5 6.5l4.2 4L14.5 1.5" fill="none" stroke="#14a95c" stroke-width="1.6" stroke-linecap="round" stroke-linejoin="round"/></svg></td><td class="c"></td><td></td></tr></tbody></table><div class="hsh"></div></div>
  <div class="hscroll"><div class="th"></div><svg class="abs" style="left:0;top:0" width="1345" height="17" viewBox="0 0 1345 17"><g fill="none" stroke="#505050" stroke-width="2" stroke-linejoin="miter"><path d="M11.500 4.500l-4 4 4 4"/><path d="M1335 4.500l4 4-4 4"/></g></svg></div>
  <div class="fly"><svg width="16" height="32" viewBox="0 0 16 32"><path d="M9.5 12.5l-3.5 3.5 3.5 3.5" fill="none" stroke="#fff" stroke-width="1.8" stroke-linecap="round" stroke-linejoin="round"/></svg></div>
  <div class="t total">Tổng số: <b>9</b> kết quả</div>
</main>

<!-- ANNOTATIONS -->
<div class="redbox" style="left:2px;top:112px;width:191px;height:48px"></div>
<div class="badge" style="left:173px;top:92px">1</div>
<div class="redbox" style="left:320px;top:49px;width:187px;height:41px"></div>
<div class="badge" style="left:487px;top:71px">2</div>
<div class="redbox" style="left:1262px;top:98px;width:99px;height:34px"></div>
<div class="badge" style="left:1240px;top:73px">3</div>
</body>
</html>
